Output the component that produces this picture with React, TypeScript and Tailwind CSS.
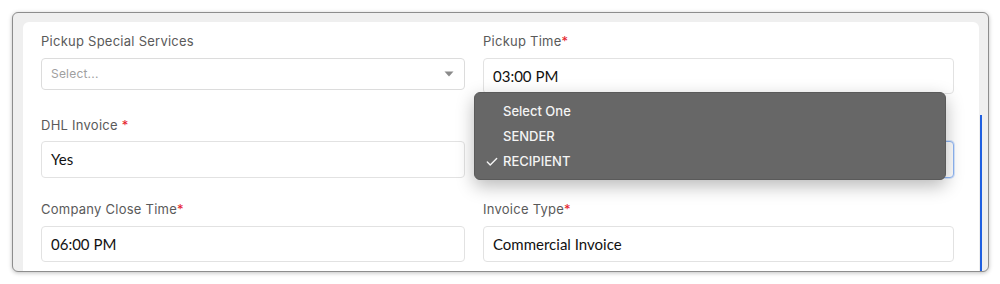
import { Check } from 'lucide-react';

const LABEL = "h-[17px] text-[13px] leading-[17px] tracking-[0.25px] text-[#5a5a5a] font-['Inter',sans-serif]";
const INPUT =
  "flex items-center rounded-[4px] border border-[#e2e2e2] bg-white px-[9px] text-[15px] text-[#111111] font-['Lato',sans-serif]";

function Label({ text, required, spaced }: { text: string; required?: boolean; spaced?: boolean }) {
  return (
    <div className={LABEL}>
      {text}
      {required && <span className="text-[#e5202a]">{spaced ? ' *' : '*'}</span>}
    </div>
  );
}

export default function App() {
  return (
    <div className="h-[284px] w-[1000px] bg-white pl-[12px] pt-[12px]">
      {/* Window frame */}
      <div className="flex h-[260px] w-[977px] overflow-hidden rounded-[6px] border border-[#8d8d8d] bg-[#efefef] pl-[10px] pt-[9px] shadow-[0_1px_4px_rgba(0,0,0,0.25)]">
        {/* Card */}
        <div className="relative h-[280px] w-[956px] rounded-t-[6px] bg-white pl-[18px] pt-[11px]">
          <div className="grid grid-cols-[424px_471px] items-start gap-x-[18px] gap-y-[23px]">
            {/* Row 1 */}
            <div className="flex flex-col gap-[8px]">
              <Label text="Pickup Special Services" />
              <div className="flex h-[32px] items-center justify-between rounded-[4px] border border-[#dcdcdc] bg-white pl-[9px] pr-[10px]">
                <span className="text-[12px] tracking-[0.2px] text-[#a0a0a0] font-['Inter',sans-serif]">Select...</span>
                <svg width="10" height="6" viewBox="0 0 10 6">
                  <path d="M0.5 0.5 L9.5 0.5 L5 5.5 Z" fill="#8a8a8a" />
                </svg>
              </div>
            </div>
            <div className="flex flex-col gap-[8px]">
              <Label text="Pickup Time" required />
              <div className={`${INPUT} h-[36px]`}>03:00 PM</div>
            </div>

            {/* Row 2 */}
            <div className="flex flex-col gap-[7px]">
              <Label text="DHL Invoice" required spaced />
              <div className={`${INPUT} h-[37px]`}>Yes</div>
            </div>
            <div className="flex flex-col gap-[7px]">
              {/* label hidden under the open popup */}
              <div className="h-[17px]" />
              <div className="h-[37px] rounded-[4px] border border-[#8fb6f5] bg-white shadow-[0_0_0_1px_rgba(143,182,245,0.35)]" />
            </div>

            {/* Row 3 */}
            <div className="flex flex-col gap-[8px]">
              <Label text="Company Close Time" required />
              <div className={`${INPUT} h-[36px]`}>06:00 PM</div>
            </div>
            <div className="flex flex-col gap-[8px]">
              <Label text="Invoice Type" required />
              <div className={`${INPUT} h-[36px]`}>Commercial Invoice</div>
            </div>
          </div>

          {/* Native select popup */}
          <div className="absolute left-[451px] top-[70px] flex h-[88px] w-[472px] flex-col justify-center rounded-[6px] border border-[#5a5a5a] bg-[#676767] pl-[28px] text-[13px] font-medium leading-[25px] text-[#f4f4f4] shadow-[0_6px_18px_rgba(0,0,0,0.28)] font-['Inter',sans-serif]">
            <div>Select One</div>
            <div>SENDER</div>
            <div className="relative">
              <Check size={14} strokeWidth={2.4} className="absolute left-[-18px] top-[6px] text-[#f4f4f4]" />
              RECIPIENT
            </div>
          </div>
        </div>

        {/* Blue edge */}
        <div className="ml-[1px] mt-[93px] w-[2px] bg-[#1f5fe0]" />
      </div>
    </div>
  );
}
